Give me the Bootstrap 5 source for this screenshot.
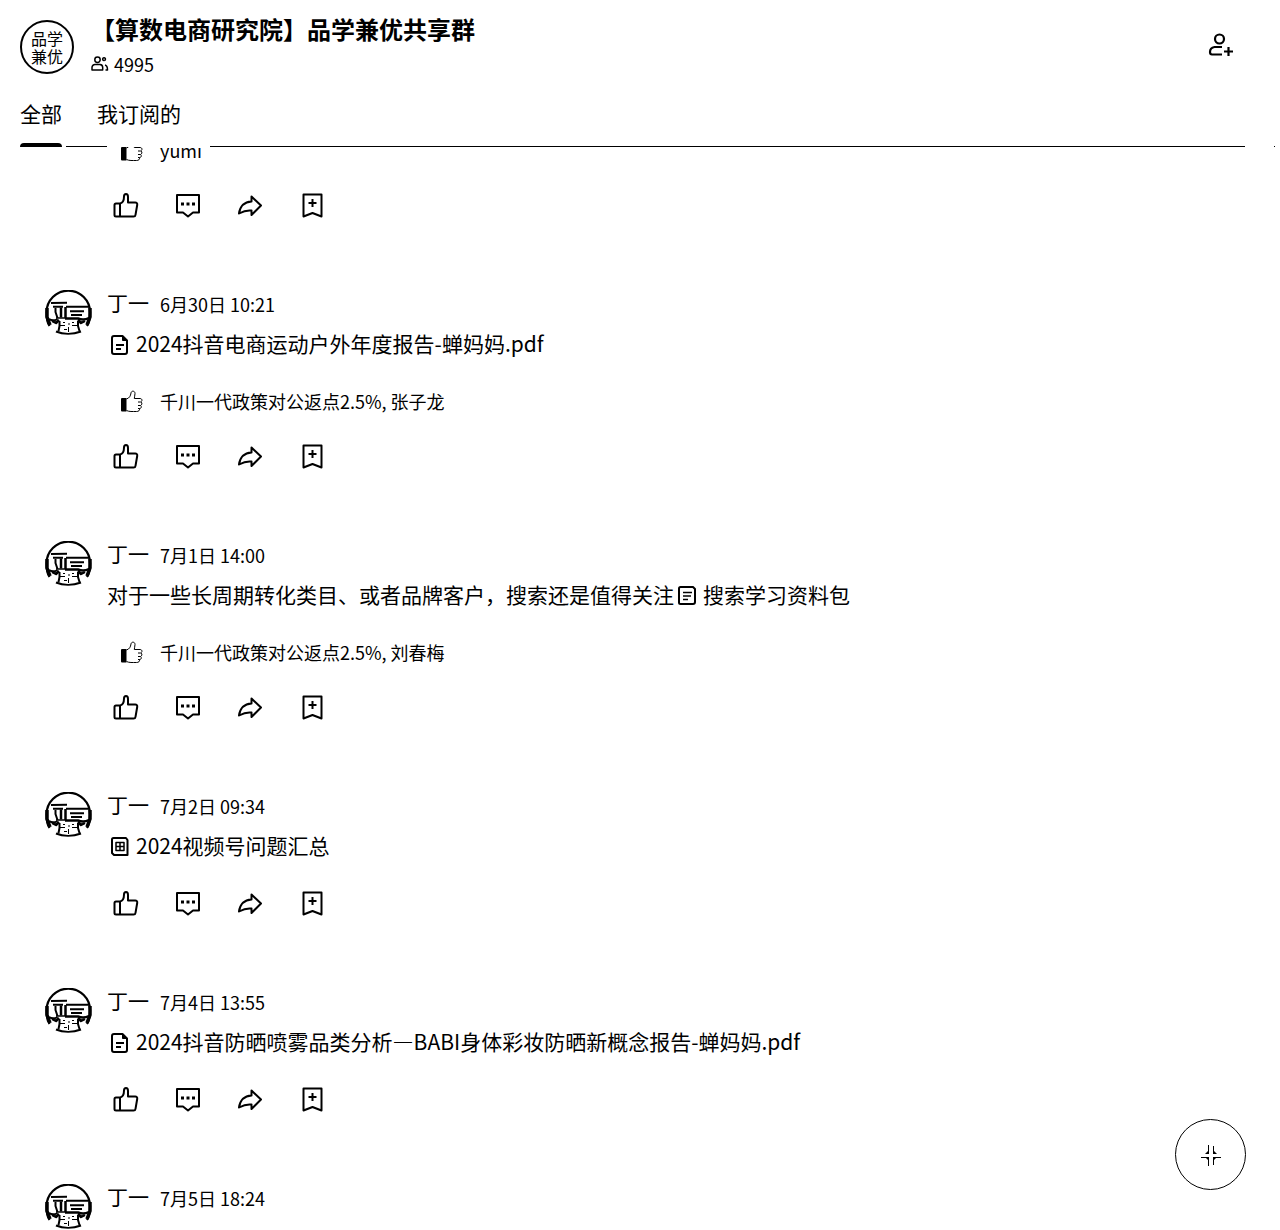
<!DOCTYPE html>
<html lang="zh-CN">
<head>
<meta charset="utf-8">
<meta name="viewport" content="width=device-width, initial-scale=1">
<title>品学兼优共享群</title>
<link href="https://cdn.jsdelivr.net/npm/bootstrap@5.3.0/dist/css/bootstrap.min.css" rel="stylesheet">
<style>
body { font-family: "Noto Sans CJK SC", "Noto Sans", sans-serif; font-size: 21px; color: #000; background: #fff; }
a, a:hover { color: #000; text-decoration: none; }
svg { fill: none; stroke: #000; stroke-width: 2; stroke-linejoin: round; flex: none; }
.solid { fill: #000; }
.icon-btn { border: 0; padding: 0; background: none; display: flex; color: #000; }
.group-head { padding: 11px 44px 0 20px; gap: 17px; }
.group-logo { width: 54px; height: 54px; margin-top: 9px; border: 2px solid #000; border-radius: 50%; font-size: 16px; line-height: 18px; }
.group-title { font-size: 24px; line-height: 36px; font-weight: 700; }
.group-count { font-size: 18px; line-height: 34px; gap: 5px; }
.invite { margin-top: 19px; }
.feed-tabs { margin-top: 17px; padding-left: 20px; gap: 35px; line-height: 30px; height: 45px; }
.tab-rule { height: 4px; padding-left: 20px; }
.tab-mark { width: 42px; height: 4px; background: #000; border-radius: 4px 4px 0 0; }
.rule-line { height: 1px; background: #000; }
.rule-start { width: 41px; margin-left: 4px; }
.rule-main { margin-left: 103px; margin-right: 29px; }
.rule-end { width: 1px; margin-right: 5px; }
.feed { min-height: 0; }
.post { padding: 0 44px 70px 45px; gap: 14px; }
.post-scrolled { margin-top: -38px; }
.portrait { width: 48px; }
.post-head { line-height: 28px; gap: 11px; }
.post-author { line-height: 25px; }
.post-time { font-size: 18px; }
.post-text { line-height: 34px; margin-top: 8px; }
.doc-icon { margin: 0 7px 0 4px; vertical-align: -4px; }
.reacted { margin-top: 28px; padding-left: 13px; gap: 16px; line-height: 27px; font-size: 18px; }
.actions { margin-top: 28px; padding-left: 5px; gap: 34px; }
.shrink-btn { right: 34px; bottom: 40px; width: 71px; height: 71px; border: 1px solid #000; border-radius: 50%; background: #fff; padding: 0; }
</style>
<script src="https://cdn.jsdelivr.net/npm/bootstrap@5.3.0/dist/js/bootstrap.bundle.min.js"></script>
</head>
<body class="d-flex flex-column vh-100 overflow-hidden">

<svg class="d-none" aria-hidden="true">
  <symbol id="portrait" viewBox="0 0 48 46">
    <path d="M4.500 36C2.500 33 1.500 29 1.500 22.500a21.800 21.800 0 0 1 43.600 0C45 29 44 33 42 36" stroke-width="2.200"/>
    <path d="M2 18v9l3 8M45 18v9l-3 8" stroke-width="3.500"/>
    <path d="M6 13l16-.3" stroke-width="2"/>
    <path d="M8 16.800h10M21 16.800h24" stroke-width="2"/>
    <path d="M10.500 18v4l2 6" stroke-width="2"/>
    <path d="M16 17.500v10M20.500 17v11" stroke-width="2.500"/>
    <path d="M11 28h10" stroke-width="1.500"/>
    <path d="M25 21.300h14M26 25h11" stroke-width="2"/>
    <path d="M20 28.500h13c4 1.500 8 1 11-.5" stroke-width="2.500"/>
    <path d="M4 29c3 2 6 1.500 8.500 0" stroke-width="2"/>
    <path d="M7 31l4 2 3-3M40 31l-4 2-3-3" stroke-width="2.500"/>
    <path d="M14.500 31v5l-1 5M33 31v5l1.500 5M11 41.500c7 3 17 3 25 0" stroke-width="2"/>
    <path d="M15 35.500h5M27 35.500h5M24 33v2M23.500 37v5M18 32.500h2M27 32.500h2M19 39.500h3" stroke-width="1"/>
  </symbol>
  <symbol id="like" viewBox="0 0 28 28">
    <path d="M8 11.500H4A1.500 1.500 0 0 0 2.500 13v10A1.500 1.500 0 0 0 4 24.500h17.500a2 2 0 0 0 2-1.700l1.700-9.800a2 2 0 0 0-2-2.500H16V5c0-2-.5-3-2-3s-2 .8-2 2.500C12 8.500 10.500 11 8 11.500zM8 11.500v13"/>
  </symbol>
  <symbol id="comment" viewBox="0 0 28 28">
    <path d="M3 3h22v17.500h-6L14 24.500l-5-4H3z"/>
    <path class="solid" stroke="none" d="M7 10.500h3v3H7zM12.500 10.500h3v3h-3zM18 10.500h3v3h-3z"/>
  </symbol>
  <symbol id="share" viewBox="0 0 28 28">
    <path d="M15.500 4.500l9.500 9-9.500 9.500v-4.500c-4-.5-8 .5-12.500 3 1-7 5-11.500 12.500-12z"/>
  </symbol>
  <symbol id="save" viewBox="0 0 28 28">
    <path d="M5.500 2.500h18v22L14.500 21l-9 3.500zM14.500 7v8M10.500 11h8"/>
  </symbol>
  <symbol id="thumb" viewBox="0 0 24 24">
    <path class="solid" stroke="none" d="M1 9q0-1 1-1h4.500v13.500H2q-1 0-1-1z"/>
    <path stroke-width="1" d="M6.500 9C9.500 8 10.500 6 11 3c.3-2.500 4-2.500 4 .5 0 2-.7 3.500-.7 5H20c2.500 0 2.500 3 .5 3.500H18M21 12c1.500 1 1 3-.5 3.500H18M20.500 15.500c1.500 1 .8 3-.8 3H18M19.500 18.500c.5 2-1 3-3 3-4 0-7.500.3-10-1"/>
  </symbol>
  <symbol id="file" viewBox="0 0 18 22">
    <path d="M3 2h8.500L16 6.500V18a2 2 0 0 1-2 2H3a2 2 0 0 1-2-2V4a2 2 0 0 1 2-2zM5 11h8M5 15h5"/>
    <path class="solid" d="M11.500 2v4.500H16z" stroke-width="1"/>
  </symbol>
  <symbol id="doc" viewBox="0 0 18 22">
    <path d="M2.500 2H15l2 2v13a2 2 0 0 1-2 2H2.500A1.500 1.500 0 0 1 1 17.500v-14A1.500 1.500 0 0 1 2.500 2z"/>
    <path d="M5 7.500h9M5 11h8M5 14.500h5" stroke-width="1.500"/>
  </symbol>
  <symbol id="sheet" viewBox="0 0 18 22">
    <path d="M2.500 2H15l1.500 2v15H3L1 17V3.500A1.500 1.500 0 0 1 2.500 2z"/>
    <path d="M5 6.500h8v8H5zM9 6.500v8M5 10.500h8" stroke-width="1.500"/>
  </symbol>
</svg>

<header>
  <div class="group-head d-flex">
    <div class="group-logo d-flex flex-column align-items-center justify-content-center"><span>品学</span><span>兼优</span></div>
    <div class="flex-grow-1">
      <h1 class="group-title m-0">【算数电商研究院】品学兼优共享群</h1>
      <div class="group-count d-flex align-items-center">
        <svg width="18" height="16" viewBox="0 0 18 16"><path stroke-width="1.500" d="M6.500 1a2.700 2.700 0 1 1 0 5.400 2.700 2.700 0 0 1 0-5.400zM4 8.500h5a3 3 0 0 1 2.700 3V14H1v-2.500a3 3 0 0 1 3-3zM13 4.500a1.400 1.400 0 1 1 .1 0M14 9c2 .5 2.500 2 2.500 5h-2"/></svg>
        <span>4995</span>
      </div>
    </div>
    <div class="invite">
      <button class="icon-btn" type="button" aria-label="添加成员">
        <svg width="28" height="30" viewBox="0 0 28 30"><path stroke-width="2.200" d="M11.500 4.500a4.500 4.500 0 1 1 0 9 4.500 4.500 0 0 1 0-9zM14 17H6.500C3 17.500 2 20 2 22q0 2.500 2 2.500h10M20.500 17v9M16 21.500h9"/></svg>
      </button>
    </div>
  </div>
  <nav class="feed-tabs d-flex" aria-label="分类">
    <a href="#all" aria-current="page">全部</a>
    <a href="#subscribed">我订阅的</a>
  </nav>
  <div class="tab-rule d-flex align-items-end">
    <div class="tab-mark"></div>
    <div class="rule-line rule-start"></div>
    <div class="rule-line rule-main flex-grow-1"></div>
    <div class="rule-line rule-end"></div>
  </div>
</header>

<main class="feed flex-grow-1 overflow-hidden" id="all">
  <article class="post post-scrolled d-flex">
    <div class="portrait flex-shrink-0"></div>
    <div class="flex-grow-1">
      <div class="reacted d-flex align-items-center"><svg width="24" height="24"><use href="#thumb"/></svg><span>yumi</span></div>
      <div class="actions d-flex">
        <button class="icon-btn" type="button" aria-label="点赞"><svg width="28" height="28"><use href="#like"/></svg></button>
        <button class="icon-btn" type="button" aria-label="评论"><svg width="28" height="28"><use href="#comment"/></svg></button>
        <button class="icon-btn" type="button" aria-label="转发"><svg width="28" height="28"><use href="#share"/></svg></button>
        <button class="icon-btn" type="button" aria-label="收藏"><svg width="28" height="28"><use href="#save"/></svg></button>
      </div>
    </div>
  </article>

  <article class="post d-flex">
    <svg class="portrait" height="46"><use href="#portrait"/></svg>
    <div class="flex-grow-1">
      <div class="post-head d-flex"><span class="post-author">丁一</span><time class="post-time">6月30日 10:21</time></div>
      <div class="post-text"><a href="#file-1"><svg class="doc-icon" width="18" height="22"><use href="#file"/></svg>2024抖音电商运动户外年度报告-蝉妈妈.pdf</a></div>
      <div class="reacted d-flex align-items-center"><svg width="24" height="24"><use href="#thumb"/></svg><span>千川一代政策对公返点2.5%, 张子龙</span></div>
      <div class="actions d-flex">
        <button class="icon-btn" type="button" aria-label="点赞"><svg width="28" height="28"><use href="#like"/></svg></button>
        <button class="icon-btn" type="button" aria-label="评论"><svg width="28" height="28"><use href="#comment"/></svg></button>
        <button class="icon-btn" type="button" aria-label="转发"><svg width="28" height="28"><use href="#share"/></svg></button>
        <button class="icon-btn" type="button" aria-label="收藏"><svg width="28" height="28"><use href="#save"/></svg></button>
      </div>
    </div>
  </article>

  <article class="post d-flex">
    <svg class="portrait" height="46"><use href="#portrait"/></svg>
    <div class="flex-grow-1">
      <div class="post-head d-flex"><span class="post-author">丁一</span><time class="post-time">7月1日 14:00</time></div>
      <div class="post-text">对于一些长周期转化类目、或者品牌客户，搜索还是值得关注<a href="#file-2"><svg class="doc-icon" width="18" height="22"><use href="#doc"/></svg>搜索学习资料包</a></div>
      <div class="reacted d-flex align-items-center"><svg width="24" height="24"><use href="#thumb"/></svg><span>千川一代政策对公返点2.5%, 刘春梅</span></div>
      <div class="actions d-flex">
        <button class="icon-btn" type="button" aria-label="点赞"><svg width="28" height="28"><use href="#like"/></svg></button>
        <button class="icon-btn" type="button" aria-label="评论"><svg width="28" height="28"><use href="#comment"/></svg></button>
        <button class="icon-btn" type="button" aria-label="转发"><svg width="28" height="28"><use href="#share"/></svg></button>
        <button class="icon-btn" type="button" aria-label="收藏"><svg width="28" height="28"><use href="#save"/></svg></button>
      </div>
    </div>
  </article>

  <article class="post d-flex">
    <svg class="portrait" height="46"><use href="#portrait"/></svg>
    <div class="flex-grow-1">
      <div class="post-head d-flex"><span class="post-author">丁一</span><time class="post-time">7月2日 09:34</time></div>
      <div class="post-text"><a href="#file-3"><svg class="doc-icon" width="18" height="22"><use href="#sheet"/></svg>2024视频号问题汇总</a></div>
      <div class="actions d-flex">
        <button class="icon-btn" type="button" aria-label="点赞"><svg width="28" height="28"><use href="#like"/></svg></button>
        <button class="icon-btn" type="button" aria-label="评论"><svg width="28" height="28"><use href="#comment"/></svg></button>
        <button class="icon-btn" type="button" aria-label="转发"><svg width="28" height="28"><use href="#share"/></svg></button>
        <button class="icon-btn" type="button" aria-label="收藏"><svg width="28" height="28"><use href="#save"/></svg></button>
      </div>
    </div>
  </article>

  <article class="post d-flex">
    <svg class="portrait" height="46"><use href="#portrait"/></svg>
    <div class="flex-grow-1">
      <div class="post-head d-flex"><span class="post-author">丁一</span><time class="post-time">7月4日 13:55</time></div>
      <div class="post-text"><a href="#file-4"><svg class="doc-icon" width="18" height="22"><use href="#file"/></svg>2024抖音防晒喷雾品类分析—BABI身体彩妆防晒新概念报告-蝉妈妈.pdf</a></div>
      <div class="actions d-flex">
        <button class="icon-btn" type="button" aria-label="点赞"><svg width="28" height="28"><use href="#like"/></svg></button>
        <button class="icon-btn" type="button" aria-label="评论"><svg width="28" height="28"><use href="#comment"/></svg></button>
        <button class="icon-btn" type="button" aria-label="转发"><svg width="28" height="28"><use href="#share"/></svg></button>
        <button class="icon-btn" type="button" aria-label="收藏"><svg width="28" height="28"><use href="#save"/></svg></button>
      </div>
    </div>
  </article>

  <article class="post d-flex">
    <svg class="portrait" height="46"><use href="#portrait"/></svg>
    <div class="flex-grow-1">
      <div class="post-head d-flex"><span class="post-author">丁一</span><time class="post-time">7月5日 18:24</time></div>
    </div>
  </article>
</main>

<button class="shrink-btn position-fixed d-flex align-items-center justify-content-center" type="button" aria-label="退出全屏">
  <svg width="22" height="24" viewBox="0 0 22 24"><path stroke-width="1" d="M8.500 2v8.500M13.500 3v7.500M1 14.500h7.500V23M21 14.500h-7.500V22"/><path class="solid" stroke="none" d="M9 7v4H5zM13 7v4h4zM9 18v-4H5zM13 18v-4h4z"/></svg>
</button>
</body>
</html>
